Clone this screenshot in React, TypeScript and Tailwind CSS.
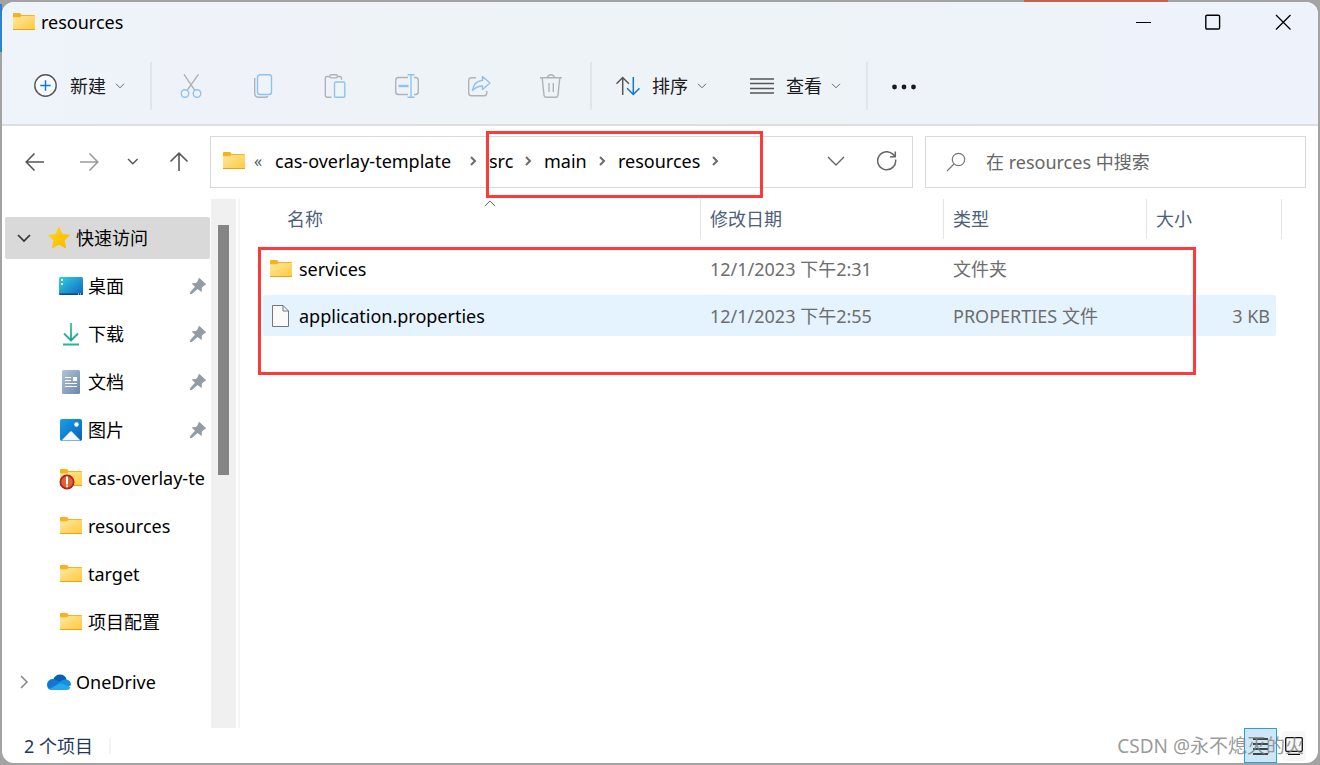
import type { ReactNode } from "react";

const quickAccess = [
  { id: 1, icon: DesktopIcon, name: "桌面", pinned: true },
  { id: 2, icon: DownloadIcon, name: "下载", pinned: true },
  { id: 3, icon: DocumentIcon, name: "文档", pinned: true },
  { id: 4, icon: PictureIcon, name: "图片", pinned: true },
  { id: 5, icon: AlertFolderIcon, name: "cas-overlay-te", pinned: false },
  { id: 6, icon: FolderIcon, name: "resources", pinned: false },
  { id: 7, icon: FolderIcon, name: "target", pinned: false },
  { id: 8, icon: FolderIcon, name: "项目配置", pinned: false },
];

const crumbs = [
  { name: "cas-overlay-template", width: "w-[183px]" },
  { name: "src", width: "w-6" },
  { name: "main", width: "w-[43px]" },
  { name: "resources", width: "w-[82px]" },
];

const files = [
  {
    id: 1,
    icon: FolderIcon,
    name: "services",
    modified: "12/1/2023 下午2:31",
    type: "文件夹",
    size: "",
    active: false,
  },
  {
    id: 2,
    icon: FileIcon,
    name: "application.properties",
    modified: "12/1/2023 下午2:55",
    type: "PROPERTIES 文件",
    size: "3 KB",
    active: true,
  },
];

const actions = [
  { id: "cut", label: "剪切", icon: CutIcon },
  { id: "copy", label: "复制", icon: CopyIcon },
  { id: "paste", label: "粘贴", icon: PasteIcon },
  { id: "rename", label: "重命名", icon: RenameIcon },
  { id: "share", label: "共享", icon: ShareIcon },
  { id: "delete", label: "删除", icon: TrashIcon },
];

/* Icons */

function FolderIcon() {
  return (
    <svg width="22" height="18" viewBox="0 0 22 18" className="shrink-0">
      <defs>
        <linearGradient id="folder" x1="0" y1="0" x2="1" y2="1">
          <stop offset="0" stopColor="#ffe8a0" />
          <stop offset="1" stopColor="#ffca3e" />
        </linearGradient>
      </defs>
      <path d="M0 1Q0 0 1 0h5.600q.6 0 1 .5L8.500 2H21q1 0 1 1v3H0z" fill="#f7b21c" />
      <path d="M0 4.200h7L8.500 3H22v13.500H0z" fill="url(#folder)" />
      <path d="M0 16h22v.5q0 .5-.5.5H.5q-.5 0-.5-.5z" fill="#e8a31c" />
    </svg>
  );
}

function AlertFolderIcon() {
  return (
    <span className="relative flex">
      <FolderIcon />
      <svg width="16" height="16" viewBox="0 0 16 16" className="absolute top-[5px] -left-px">
        <circle cx="8" cy="8" r="7.500" fill="#b8200f" />
        <circle cx="8" cy="8" r="5.800" fill="#d9633a" />
        <path d="M8 2.500v8" stroke="#fff" strokeWidth="2" />
        <path d="M8 11.300v2" stroke="#fff" strokeWidth="1.600" />
      </svg>
    </span>
  );
}

function FileIcon() {
  return (
    <svg width="22" height="22" viewBox="0 0 22 22" className="shrink-0">
      <path d="M2.500.5h10.500l5.500 5.500v15.500h-16z" fill="#fafafa" stroke="#767676" />
      <path d="M13 .5v5.500h5.500" fill="none" stroke="#767676" />
    </svg>
  );
}

function DesktopIcon() {
  return (
    <svg width="24" height="18" viewBox="0 0 24 18">
      <defs>
        <linearGradient id="desktop" x1="0" y1="0" x2="1" y2="1">
          <stop offset="0" stopColor="#31d3e4" />
          <stop offset="1" stopColor="#0f63bd" />
        </linearGradient>
      </defs>
      <rect width="24" height="18" rx="1.500" fill="url(#desktop)" />
      <path d="M0 16.500h24q0 1.500-1.500 1.500h-21Q0 18 0 16.500" fill="#0b4a80" />
      <path d="M2 2h2v2H2zM2 6h2v2H2zM19 16.500h1v1h-1zM21 16.500h1v1h-1z" fill="#fff" />
    </svg>
  );
}

function DownloadIcon() {
  return (
    <svg width="24" height="24" viewBox="0 0 24 24" fill="none">
      <defs>
        <linearGradient id="download" gradientUnits="userSpaceOnUse" x1="0" y1="0" x2="4" y2="24">
          <stop offset="0" stopColor="#36cf8e" />
          <stop offset="1" stopColor="#119c9c" />
        </linearGradient>
      </defs>
      <path d="M12.010 1L12 18.500M5 11.500l7 7 7-7" stroke="url(#download)" strokeWidth="1.800" />
      <path d="M4 21.500h16v2H4z" fill="#22b78f" />
    </svg>
  );
}

function DocumentIcon() {
  return (
    <svg width="24" height="24" viewBox="0 0 24 24">
      <defs>
        <linearGradient id="document" x1="0" y1="0" x2="1" y2="1">
          <stop offset="0" stopColor="#b2c3d8" />
          <stop offset="1" stopColor="#6a88ab" />
        </linearGradient>
      </defs>
      <rect x="3" width="18" height="24" rx="1.500" fill="url(#document)" />
      <path d="M6 7.500h6M6 10.500h6M6 13.500h12M6 16.500h12" stroke="#fff" strokeWidth="1.200" />
      <path d="M14 7h4v4h-4z" fill="#fff" />
    </svg>
  );
}

function PictureIcon() {
  return (
    <svg width="24" height="22" viewBox="0 0 24 22">
      <defs>
        <linearGradient id="picture" x1="0" y1="0" x2="1" y2="1">
          <stop offset="0" stopColor="#1aa0e8" />
          <stop offset="1" stopColor="#0961b5" />
        </linearGradient>
      </defs>
      <rect x="1" width="22" height="22" rx="2" fill="url(#picture)" />
      <path d="M2.500 21.500l8.300-8.600q1.200-1.200 2.400 0l8.300 8.600z" fill="#f2f8fd" />
      <circle cx="17.500" cy="5.500" r="2.200" fill="#fff" />
    </svg>
  );
}

function StarIcon() {
  return (
    <svg width="24" height="24" viewBox="0 0 24 24">
      <defs>
        <linearGradient id="star" x1="0" y1="0" x2="1" y2="1">
          <stop offset="0" stopColor="#ffd91a" />
          <stop offset="1" stopColor="#ffb400" />
        </linearGradient>
      </defs>
      <path
        d="M12 1.500l3.200 6.900 7.300.9-5.400 5 1.500 7.500L12 18.200l-6.600 3.600 1.500-7.500-5.400-5 7.300-.9z"
        fill="url(#star)"
        stroke="url(#star)"
        strokeLinejoin="round"
      />
    </svg>
  );
}

function CloudIcon() {
  return (
    <svg width="24" height="16" viewBox="0 0 24 16">
      <path d="M6 6Q8 .5 13 .5q5 0 6.500 5L12 10z" fill="#0a5fb4" />
      <path d="M5 16Q0 15.500 0 10.500 .5 5.500 5.500 5q3 0 6.500 2.500l5 3.500L6 16z" fill="#0f78d4" />
      <path d="M11 9q4.500-4 8.500-3.500Q24 6.500 24 11l-2.500 2z" fill="#1490df" />
      <path d="M2.500 15l9.500-5.500q2-.8 3.500.3l8 3.700Q22.500 16 19.500 16h-14q-1.500 0-3-1" fill="#28a8ea" />
    </svg>
  );
}

function PinIcon() {
  return (
    <svg width="16" height="16" viewBox="0 0 16 16" className="shrink-0" fill="#929ca3">
      <path d="M8.600.4q.7-.7 1.400 0l5.600 5.400q.7.8-.2 1.200l-2 .9-1.700 2 .2 3.300q-.1 1-1 .4L7.600 10.900l-5.800 5H.1v-1.600l4.900-5.500-2.700-2.500q-.7-.9.400-1.100l3.400-.3 1.600-2z" />
    </svg>
  );
}

function CutIcon() {
  return (
    <svg width="24" height="24" viewBox="0 0 24 24" fill="none" strokeWidth="1.400">
      <path d="M5 .3l10.800 16M19.500.3L8.300 16" stroke="#b0b3b6" />
      <circle cx="6" cy="19.500" r="3.800" stroke="#8ec3ee" />
      <circle cx="18" cy="19.500" r="3.800" stroke="#8ec3ee" />
    </svg>
  );
}

function CopyIcon() {
  return (
    <svg width="24" height="24" viewBox="0 0 24 24" fill="none" strokeWidth="1.400">
      <path d="M3.700 4V19q0 4.300 4.300 4.300h6q2 0 3-1" stroke="#b0b3b6" />
      <rect x="6.500" y=".7" width="14" height="19.800" rx="2.500" stroke="#8ec3ee" fill="#edf4fb" />
    </svg>
  );
}

function PasteIcon() {
  return (
    <svg width="24" height="24" viewBox="0 0 24 24" fill="none" strokeWidth="1.400">
      <path d="M8.500 23.300H4q-1.700 0-1.700-1.700V4.200q0-1.700 1.700-1.700h2.500M14.500 2.500h2.200q1.800 0 1.800 1.700v1.600" stroke="#b0b3b6" />
      <rect x="6.700" y=".7" width="7.800" height="3.200" rx="1.600" stroke="#b0b3b6" />
      <rect x="11.500" y="8" width="10.300" height="15.300" rx="1.200" stroke="#8ec3ee" fill="#edf4fb" />
    </svg>
  );
}

function RenameIcon() {
  return (
    <svg width="24" height="24" viewBox="0 0 24 24" fill="none" strokeWidth="1.400">
      <path d="M13 3.500H3.500Q.7 3.500.7 6.300v11.400q0 2.800 2.800 2.800H13M19 3.500h1.500q2.800 0 2.800 2.800v11.400q0 2.800-2.800 2.800H19" stroke="#b0b3b6" />
      <path d="M16 .7v22.600M12.500.7h7M12.500 23.300h7" stroke="#8ec3ee" />
      <path d="M3.500 12h10" stroke="#8ec3ee" strokeWidth="2.400" />
    </svg>
  );
}

function ShareIcon() {
  return (
    <svg width="24" height="24" viewBox="0 0 24 24" fill="none" strokeWidth="1.400" strokeLinejoin="round">
      <path d="M9 3.700H4.500q-2.800 0-2.800 2.800v12.500q0 2.800 2.800 2.800H17q2.800 0 2.800-2.800V17" stroke="#b0b3b6" />
      <path d="M15.500 2.500L23 9l-7.500 6.500V12q-6 .2-10 4.500Q6.500 7.500 15.500 6.200z" stroke="#8ec3ee" />
    </svg>
  );
}

function TrashIcon() {
  return (
    <svg width="24" height="24" viewBox="0 0 24 24" fill="none" stroke="#b0b3b6" strokeWidth="1.400">
      <path d="M1 3.700h22M8.500 3.700Q9 .7 12 .7t3.500 3M3.200 3.700L5 21.300q.3 2 2.300 2h9.400q2 0 2.300-2l1.800-17.600M10 9v9M14.300 9v9" />
    </svg>
  );
}

function ChevronDown({ className = "" }: { className?: string }) {
  return (
    <svg width="10" height="6" viewBox="0 0 10 6" fill="none" stroke="currentColor" className={className}>
      <path d="M1 .8l4 4 4-4" />
    </svg>
  );
}

function CrumbArrow() {
  return (
    <svg width="7" height="10" viewBox="0 0 7 10" fill="none" stroke="#6b6b6b" strokeWidth="2" className="shrink-0">
      <path d="M1 1l4 4-4 4" />
    </svg>
  );
}

function ArrowLeft({ className = "" }: { className?: string }) {
  return (
    <svg width="20" height="20" viewBox="0 0 20 20" fill="none" stroke="currentColor" strokeWidth="1.600" className={className}>
      <path d="M19 10H1.500M9.500 1.500L1.200 10l8.300 8.500" />
    </svg>
  );
}

/* Parts */

function IconButton({ label, className = "", children }: { label: string; className?: string; children: ReactNode }) {
  return (
    <button type="button" aria-label={label} className={`flex shrink-0 items-center justify-center ${className}`}>
      {children}
    </button>
  );
}

function Separator() {
  return <div className="h-12 w-0.5 shrink-0 bg-[#e0e5ea]" />;
}

function TitleBar() {
  return (
    <div className="flex h-11 items-center pb-1 pl-[11px]">
      <FolderIcon />
      <h1 className="ml-1.5 flex-1 text-lg leading-6">resources</h1>
      <IconButton label="最小化" className="h-10 w-[70px]">
        <svg width="16" height="16" stroke="#000">
          <path d="M1 8.500h15" />
        </svg>
      </IconButton>
      <IconButton label="最大化" className="h-10 w-[70px]">
        <svg width="16" height="16" fill="none" stroke="#000" strokeWidth="1.400">
          <rect x=".8" y="1.200" width="13.800" height="13.800" rx="1.200" />
        </svg>
      </IconButton>
      <IconButton label="关闭" className="h-10 w-[70px]">
        <svg width="16" height="16" stroke="#000" strokeWidth="1.300">
          <path d="M1 1l14.500 14.500M15.500 1L1 15.500" />
        </svg>
      </IconButton>
    </div>
  );
}

function Toolbar() {
  return (
    <div className="flex h-20 items-center border-b-2 border-[#dbdfe5] pt-0.5 pl-8 text-lg leading-6 text-[#1a1a1a]">
      <button type="button" className="mr-[25px] flex items-center">
        <svg width="24" height="24" viewBox="0 0 24 24" fill="none" className="mr-3">
          <circle cx="11.500" cy="11.500" r="10.700" stroke="#555" strokeWidth="1.400" fill="#f8fbfd" />
          <path d="M11.500 6.300v10.400M6.300 11.500h10.400" stroke="#0f78d4" strokeWidth="1.500" />
        </svg>
        新建
        <ChevronDown className="ml-[9px] text-[#666]" />
      </button>
      <Separator />
      <div className="mx-[15px] flex gap-6">
        {actions.map((action) => (
          <IconButton key={action.id} label={action.label} className="h-12 w-12">
            <action.icon />
          </IconButton>
        ))}
      </div>
      <Separator />
      <button type="button" className="ml-6 flex items-center">
        <svg width="24" height="24" viewBox="0 0 24 24" fill="none" strokeWidth="1.500" className="mr-3">
          <path d="M6.700 21V3.500M.5 9.700l6.200-6.200 6.200 6.200" stroke="#555" />
          <path d="M17.300 3v17.500M11.100 14.300l6.200 6.200 6.200-6.200" stroke="#0f78d4" />
        </svg>
        排序
        <ChevronDown className="ml-[9px] text-[#666]" />
      </button>
      <button type="button" className="mr-[25px] ml-[43px] flex items-center">
        <svg width="24" height="24" viewBox="0 0 24 24" stroke="#555" strokeWidth="1.500" className="mr-3">
          <path d="M0 5h24M0 9.500h24M0 14.500h24M0 19h24" />
        </svg>
        查看
        <ChevronDown className="ml-[9px] text-[#666]" />
      </button>
      <Separator />
      <IconButton label="更多" className="ml-3 h-12 w-12">
        <svg width="24" height="24" viewBox="0 0 24 24" fill="#1a1a1a">
          <circle cx="2.500" cy="13" r="2.400" />
          <circle cx="12" cy="13" r="2.400" />
          <circle cx="21.500" cy="13" r="2.400" />
        </svg>
      </IconButton>
    </div>
  );
}

function AddressRow() {
  return (
    <div className="flex items-center pt-2.5 pr-3 pb-[11px] pl-[23px] text-[#555]">
      <IconButton label="后退">
        <ArrowLeft />
      </IconButton>
      <IconButton label="前进" className="ml-[34px] text-[#9a9a9a]">
        <ArrowLeft className="rotate-180" />
      </IconButton>
      <IconButton label="最近位置" className="ml-7">
        <svg width="12" height="8" viewBox="0 0 12 8" fill="none" stroke="currentColor" strokeWidth="1.400">
          <path d="M1 1l4.800 4.800L10.600 1" />
        </svg>
      </IconButton>
      <IconButton label="上移" className="mr-[21px] ml-[30px]">
        <ArrowLeft className="rotate-90" />
      </IconButton>

      <nav className="relative flex h-[52px] flex-1 items-center border border-[#d9d9d9] bg-white pb-0.5 pl-3 text-lg leading-6 text-black">
        <FolderIcon />
        <span className="ml-[9px] w-[17px] text-base leading-6 text-[#555]">«</span>
        {crumbs.map((crumb) => (
          <span key={crumb.name} className="flex items-center">
            <a href="#" className={`mr-3 ml-1 whitespace-nowrap ${crumb.width}`}>
              {crumb.name}
            </a>
            <CrumbArrow />
            <span className="w-2" />
          </span>
        ))}
        <IconButton label="历史记录" className="mr-8 ml-auto">
          <svg width="18" height="10" viewBox="0 0 18 10" fill="none" stroke="#666" strokeWidth="1.400">
            <path d="M1 1l8 8 8-8" />
          </svg>
        </IconButton>
        <IconButton label="刷新" className="mr-[15px]">
          <svg width="20" height="20" viewBox="0 0 20 20" fill="none" stroke="#666" strokeWidth="1.500">
            <path d="M18.600 8.500A9 9 0 1 1 15.500 2.900l2.500 2.400M18.300 .5v5.300h-5.300" />
          </svg>
        </IconButton>
        <div className="pointer-events-none absolute -top-1.5 left-[275px] h-[67px] w-[277px] border-3 border-[#fb3a3a]" />
      </nav>

      <label className="ml-3 flex h-[52px] w-[381px] items-center border border-[#d9d9d9] bg-white pl-5">
        <svg width="20" height="20" viewBox="0 0 20 20" fill="none" stroke="#777" strokeWidth="1.200">
          <circle cx="12.500" cy="7.500" r="6.200" />
          <path d="M8 12l-7 7" />
        </svg>
        <input
          type="search"
          aria-label="搜索"
          placeholder="在 resources 中搜索"
          className="ml-5 min-w-0 flex-1 text-lg leading-6 outline-none placeholder:text-[#666]"
        />
      </label>
    </div>
  );
}

function Sidebar() {
  return (
    <aside className="flex w-[238px] shrink-0 border-r-2 border-[#f5f5f5] text-lg leading-6">
      <div className="min-w-0 flex-1 pt-[18px] pl-[3px]">
        <a href="#" className="mb-[3px] flex h-[42px] items-center rounded-xs bg-[#d9d9d9] pl-3">
          <svg width="14" height="9" viewBox="0 0 14 9" fill="none" stroke="#333" strokeWidth="1.700">
            <path d="M1 1l6 6 6-6" />
          </svg>
          <span className="mr-[5px] ml-4">
            <StarIcon />
          </span>
          快速访问
        </a>
        {quickAccess.map((item) => (
          <a key={item.id} href="#" className="flex h-12 items-center pl-[54px]">
            <span className="mr-[5px] flex w-6 shrink-0 justify-center">
              <item.icon />
            </span>
            <span className="flex-1 whitespace-nowrap">{item.name}</span>
            {item.pinned && (
              <span className="mr-1">
                <PinIcon />
              </span>
            )}
          </a>
        ))}
        <a href="#" className="mt-3 flex h-12 items-center pl-3">
          <svg width="14" height="14" viewBox="0 0 14 14" fill="none" stroke="#8a8a8a" strokeWidth="1.600">
            <path d="M4 1l6 6-6 6" />
          </svg>
          <span className="mr-[5px] ml-4">
            <CloudIcon />
          </span>
          OneDrive
        </a>
      </div>
      {/* Scrollbar */}
      <div className="mr-0.5 ml-px w-[25px] bg-[#f0f0f0] pt-[26px] pl-[7px]">
        <div className="h-[250px] w-[11px] bg-[#858585]" />
      </div>
    </aside>
  );
}

function HeaderCell({ children }: { children: ReactNode }) {
  return (
    <th className="h-[46px] p-0 text-left align-top font-normal">
      <div className="flex h-10 items-center border-r border-[#e5e5e5] pl-[9px]">{children}</div>
    </th>
  );
}

function FileList() {
  return (
    <main className="relative min-w-0 flex-1 pr-9 pl-[23px] text-lg leading-6">
      <table className="w-full table-fixed border-collapse text-[#6d6d6d]">
        <colgroup>
          <col />
          <col className="w-[243px]" />
          <col className="w-[203px]" />
          <col className="w-[135px]" />
        </colgroup>
        <thead className="text-[#4c607a]">
          <tr>
            <th className="h-[46px] p-0 text-left align-top font-normal">
              <div className="relative ml-4 flex h-10 items-center border-r border-[#e5e5e5] pl-2">
                名称
                <svg width="12" height="7" viewBox="0 0 12 7" fill="none" stroke="#666" className="absolute top-px left-1/2 -translate-x-1/2">
                  <path d="M.8 6L6 1l5.200 5" />
                </svg>
              </div>
            </th>
            <HeaderCell>修改日期</HeaderCell>
            <HeaderCell>类型</HeaderCell>
            <HeaderCell>大小</HeaderCell>
          </tr>
        </thead>
        <tbody>
          {files.map((file) => {
            const bg = file.active ? "bg-[#e5f3ff]" : "bg-white";
            return (
              <tr key={file.id}>
                <td className="px-0 py-[3px]">
                  <div className={`flex h-[41px] items-center gap-[7px] rounded-l-xs pl-[7px] text-black ${bg}`}>
                    <file.icon />
                    {file.name}
                  </div>
                </td>
                <td className="px-0 py-[3px]">
                  <div className={`flex h-[41px] items-center pl-[9px] ${bg}`}>{file.modified}</div>
                </td>
                <td className="px-0 py-[3px]">
                  <div className={`flex h-[41px] items-center pl-[9px] ${bg}`}>{file.type}</div>
                </td>
                <td className="py-[3px] pr-1.5 pl-0">
                  <div className={`flex h-[41px] items-center justify-end rounded-r-xs pr-1.5 ${bg}`}>{file.size}</div>
                </td>
              </tr>
            );
          })}
        </tbody>
      </table>
      <div className="pointer-events-none absolute top-12 right-[122px] left-[18px] h-32 border-3 border-[#fb3a3a]" />
    </main>
  );
}

function StatusBar() {
  return (
    <footer className="relative flex h-[35px] items-center pr-3 pl-[22px] text-lg leading-6 text-[#1e395b]">
      <span>2 个项目</span>
      <div className="ml-4 h-4 w-0.5 bg-[#f3f3f3]" />
      <IconButton label="详细信息" className="ml-auto h-[35px] w-[33px] border border-[#26a0da] bg-[#cce8f6]">
        <svg width="18" height="18" viewBox="0 0 18 18" stroke="#111" strokeWidth="1.400">
          <path d="M1 2h15M1 7h15M1 12h15M1 17h15" />
        </svg>
      </IconButton>
      <IconButton label="大图标" className="ml-[5px] h-[30px] w-6 rounded-sm bg-[#f7f7f7]">
        <svg width="18" height="18" viewBox="0 0 18 18" fill="none" stroke="#111" strokeWidth="1.300">
          <rect x=".7" y=".7" width="16.600" height="13.600" rx="1" />
          <path d="M3 17.300h12" />
        </svg>
      </IconButton>
      <span className="pointer-events-none absolute right-3.5 text-[19px] text-[#808080]/80">CSDN @永不熄灭的火</span>
    </footer>
  );
}

export default function App() {
  return (
    <div className="relative flex min-h-screen flex-col bg-[#a3a3a3] p-0.5 font-['Noto_Sans','Noto_Sans_CJK_SC',sans-serif]">
      {/* Desktop showing round the window */}
      <div className="absolute top-1 left-0 h-12 w-0.5 bg-[#2b83d0]" />
      <div className="absolute top-0 right-[152px] h-0.5 w-36 bg-[#c0634f]" />

      <div className="flex flex-1 flex-col overflow-hidden rounded-xl bg-white text-black">
        <header className="bg-linear-to-r from-[#eff3fa] via-[#eef3f7] to-[#eef2fb]">
          <TitleBar />
          <Toolbar />
        </header>
        <AddressRow />
        <div className="flex flex-1">
          <Sidebar />
          <FileList />
        </div>
        <StatusBar />
      </div>
    </div>
  );
}
